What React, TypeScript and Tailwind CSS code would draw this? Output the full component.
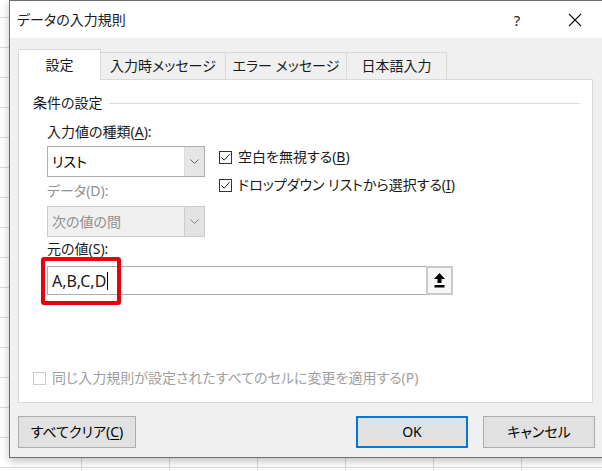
import React from "react";

const font = "font-['Noto_Sans','Noto_Sans_CJK_JP',sans-serif] [font-feature-settings:'palt']";

function Chevron({ color = "#606060" }: { color?: string }) {
  return (
    <svg width="9" height="5" viewBox="0 0 9 5" fill="none">
      <path d="M0.5 0.5 L4.5 4.5 L8.5 0.5" stroke={color} strokeWidth="1" />
    </svg>
  );
}

function Check({ checked, disabled }: { checked?: boolean; disabled?: boolean }) {
  return (
    <div
      className={`w-[13px] h-[13px] border flex items-center justify-center ${
        disabled ? "border-[#cccccc] bg-white" : "border-[#333333] bg-white"
      }`}
    >
      {checked && (
        <svg width="11" height="11" viewBox="0 0 11 11" fill="none">
          <path d="M1.5 5.5 L4.2 8.2 L9.5 2.2" stroke="#222" strokeWidth="1" />
        </svg>
      )}
    </div>
  );
}

function Select({ value, disabled }: { value: string; disabled?: boolean }) {
  return (
    <div
      className={`h-[31px] w-[158px] flex border ${
        disabled ? "border-[#cccccc] bg-[#f0f0f0]" : "border-[#adadad] bg-white"
      }`}
    >
      <div className={`flex-1 flex items-center pl-[4px] ${disabled ? "text-[#8f8f8f]" : "text-black"}`}>
        {value}
      </div>
      <div
        className={`w-[20px] flex items-center justify-center border-l ${
          disabled ? "bg-[#e3e3e3] border-[#cccccc]" : "bg-[#e6e6e6] border-[#dcdcdc]"
        }`}
      >
        <Chevron color={disabled ? "#808080" : "#606060"} />
      </div>
    </div>
  );
}

function Btn({ children, w, primary }: { children: React.ReactNode; w: string; primary?: boolean }) {
  return (
    <div
      className={`${w} h-[32px] flex items-center justify-center bg-[#e1e1e1] text-black ${
        primary ? "border-2 border-[#0078d7]" : "border border-[#adadad]"
      }`}
    >
      {children}
    </div>
  );
}

export default function App() {
  return (
    <div
      className={`${font} w-[602px] h-[471px] overflow-hidden bg-white pl-[9px] text-[14px] leading-[20px] text-[#1a1a1a] [background-image:linear-gradient(#dadada_1px,transparent_1px),linear-gradient(90deg,#dadada_1px,transparent_1px)] [background-size:88px_30px] [background-position:81px_17px]`}
    >
      <div className="w-[600px] h-[458px] border border-[#6f6f6f] bg-[#f0f0f0] flex flex-col shadow-[0_3px_8px_rgba(0,0,0,0.25)]">
        {/* title bar */}
        <div className="h-[37px] bg-white flex items-center pl-[7px] pr-[10px] shrink-0">
          <span>データの入力規則</span>
          <div className="flex-1" />
          <div className="w-[46px] flex justify-center text-[15px] text-[#222]">?</div>
          <div className="w-[12px]" />
          <div className="w-[46px] flex justify-center">
            <svg width="14" height="14" viewBox="0 0 14 14">
              <path d="M1 1 L13 13 M13 1 L1 13" stroke="#111" strokeWidth="1.1" />
            </svg>
          </div>
        </div>

        {/* body */}
        <div className="pt-[10px] px-[8px]">
          {/* tabs */}
          <div className="flex items-end h-[31px]">
            <div className="w-[83px] h-[31px] bg-white border border-b-0 border-[#d9d9d9] flex items-center justify-center relative z-10 mb-[-1px]">
              設定
            </div>
            <div className="w-[125px] h-[27px] border border-l-0 border-b-0 border-[#d9d9d9] flex items-center justify-center">
              入力時メッセージ
            </div>
            <div className="w-[121px] h-[27px] border border-l-0 border-b-0 border-[#d9d9d9] flex items-center justify-center">
              エラー メッセージ
            </div>
            <div className="w-[100px] h-[27px] border border-l-0 border-b-0 border-[#d9d9d9] flex items-center justify-center">
              日本語入力
            </div>
          </div>

          {/* panel */}
          <div className="relative w-[575px] h-[324px] bg-white border border-[#d9d9d9] pl-[14px] pr-[11px] pt-[13px] flex flex-col">
            <div className="flex items-center h-[20px]">
              <span>条件の設定</span>
              <div className="flex-1 h-px bg-[#dcdcdc] ml-[6px] mr-[1px]" />
            </div>

            <div className="pl-[14px] mt-[9px]">
              <div className="flex">
                <div className="w-[158px]">
                  <div className="h-[20px]">
                    入力値の種類(<span className="underline underline-offset-2">A</span>):
                  </div>
                  <div className="mt-[4px]">
                    <Select value="リスト" />
                  </div>
                  <div className="h-[20px] mt-[4px] text-[#8f8f8f]">データ(D):</div>
                  <div className="mt-[5px]">
                    <Select value="次の値の間" disabled />
                  </div>
                </div>
                <div className="ml-[14px] pt-[25px] flex flex-col gap-[8px]">
                  <div className="flex items-center h-[20px] gap-[6px]">
                    <Check checked />
                    <span>
                      空白を無視する(<span className="underline underline-offset-2">B</span>)
                    </span>
                  </div>
                  <div className="flex items-center h-[20px] gap-[6px]">
                    <Check checked />
                    <span>
                      ドロップダウン リストから選択する(<span className="underline underline-offset-2">I</span>)
                    </span>
                  </div>
                </div>
              </div>

              <div className="h-[20px] mt-[2px]">元の値(S):</div>
              <div className="mt-[7px] w-[406px] h-[29px] flex">
                <div className="flex-1 border border-r-0 border-[#adadad] flex items-center pl-[4px] text-[16px]">
                  <span>A,B,C,D</span>
                  <div className="w-px h-[18px] bg-black ml-px" />
                </div>
                <div className="w-[27px] border-2 border-[#c9c9c9] bg-[#f7f7f7] flex items-center justify-center">
                  <svg width="11" height="15" viewBox="0 0 11 15">
                    <path d="M5.5 0 L11 6 L7.5 6 L7.5 10 L3.5 10 L3.5 6 L0 6 Z" fill="#000" />
                    <rect x="0.5" y="12" width="10" height="2.5" fill="#000" />
                  </svg>
                </div>
              </div>
            </div>

            <div className="mt-[73px] flex items-center h-[20px] gap-[6px] text-[#a0a0a0]">
              <Check disabled />
              <span>同じ入力規則が設定されたすべてのセルに変更を適用する(P)</span>
            </div>

            {/* highlight */}
            <div className="absolute left-[22px] top-[177px] w-[80px] h-[48px] border-4 border-[#e8000b] rounded-[3px]" />
          </div>

          {/* buttons */}
          <div className="flex mt-[13px]">
            <Btn w="w-[118px]">
              すべてクリア(<span className="underline underline-offset-2">C</span>)
            </Btn>
            <div className="w-[220px]" />
            <Btn w="w-[112px]" primary>
              OK
            </Btn>
            <div className="w-[15px]" />
            <Btn w="w-[112px]">キャンセル</Btn>
          </div>
        </div>
      </div>
    </div>
  );
}
